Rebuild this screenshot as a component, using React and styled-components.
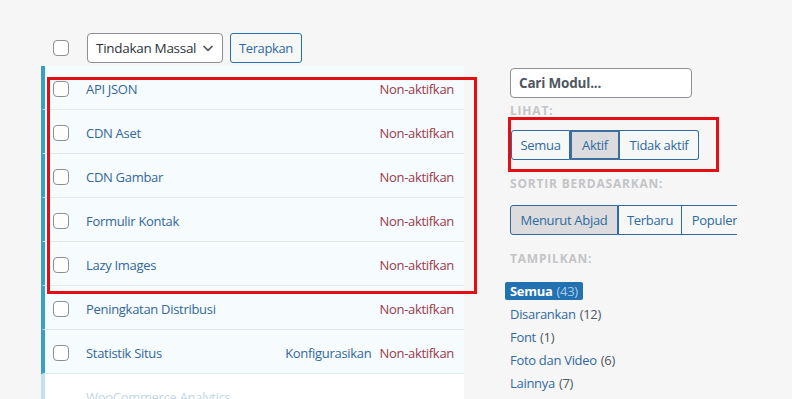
import React from "react";
import styled, { createGlobalStyle } from "styled-components";

const Global = createGlobalStyle`
  html, body { margin: 0; padding: 0; background: #f6f6f6; }
  body { font-family: "Open Sans", "Noto Sans", sans-serif; font-size: 13px; color: #2c3338; }
  * { box-sizing: border-box; }
`;

const Page = styled.div`
  display: flex;
  align-items: flex-start;
  gap: 46px;
  padding: 33px 0 0 41px;
  height: 399px;
  overflow: hidden;
`;

const Main = styled.div`
  width: 423px;
  display: flex;
  flex-direction: column;
`;

const Toolbar = styled.div`
  display: flex;
  align-items: center;
  height: 30px;
  padding-left: 12px;
`;

const Check = styled.span`
  display: inline-block;
  flex: none;
  width: 16px;
  height: 16px;
  border: 1px solid #8c8f94;
  border-radius: 4px;
  background: #fff;
`;

const Select = styled.div`
  margin-left: 18px;
  width: 136px;
  height: 30px;
  border: 1px solid #8c8f94;
  border-radius: 4px;
  background: #fff;
  display: flex;
  align-items: center;
  justify-content: space-between;
  padding: 0 6px 0 8px;
  font-size: 13.5px;
  letter-spacing: -0.3px;
  color: #2c3338;
`;

const Button = styled.div`
  margin-left: 7px;
  height: 30px;
  padding: 0 8px;
  border: 1px solid #2271b1;
  border-radius: 3px;
  background: #f6f7f7;
  color: #2f6aa0;
  display: flex;
  align-items: center;
  letter-spacing: -0.4px;
`;

const Table = styled.div`
  margin-top: 3px;
  display: flex;
  flex-direction: column;
`;

const Row = styled.div`
  height: 44px;
  flex: none;
  display: flex;
  align-items: center;
  padding: 2px 10px 0 8px;
  border-left: 4px solid ${(p) => (p.$inactive ? "#c3e2ef" : "#3a9fc5")};
  border-bottom: 1px solid #e2e8ec;
  background: ${(p) => (p.$inactive ? "#ffffff" : "#f6fbfd")};
`;

const Name = styled.span`
  margin-left: ${(p) => (p.$inactive ? "33px" : "17px")};
  flex: 1;
  color: ${(p) => (p.$inactive ? "#c5d5e2" : "#33679a")};
  letter-spacing: -0.3px;
  white-space: nowrap;
`;

const Action = styled.span`
  color: ${(p) => (p.$danger ? "#9c3a4c" : "#33679a")};
  margin-left: 8px;
  letter-spacing: -0.3px;
`;

const Side = styled.div`
  margin-top: 35px;
  width: 240px;
  display: flex;
  flex-direction: column;
  align-items: flex-start;
`;

const Search = styled.div`
  width: 182px;
  height: 30px;
  border: 1px solid #8c8f94;
  border-radius: 4px;
  background: #fff;
  display: flex;
  align-items: center;
  padding-left: 8px;
  font-weight: 700;
  color: #50575e;
  font-size: 13.5px;
  letter-spacing: -0.2px;
`;

const Label = styled.div`
  font-size: 12px;
  font-weight: 700;
  text-transform: uppercase;
  color: #c3c4c7;
  letter-spacing: 0.8px;
  margin-top: ${(p) => p.$top}px;
  line-height: 16px;
`;

const Group = styled.div`
  display: flex;
  margin-top: ${(p) => p.$top}px;
  margin-left: ${(p) => p.$left || 0}px;
  width: ${(p) => (p.$clip ? `${p.$clip}px` : "auto")};
  overflow: hidden;
`;

const Seg = styled.div`
  flex: none;
  height: 30px;
  display: flex;
  align-items: center;
  justify-content: center;
  width: ${(p) => p.$w}px;
  color: #2f6aa0;
  letter-spacing: -0.3px;
  background: ${(p) => (p.$active ? "#dcdcde" : "#f6f7f7")};
  border: ${(p) => (p.$strong ? "2px solid #3c6fa0" : "1px solid #2f6aa0")};
  border-left-width: ${(p) => (p.$first || p.$sep ? 1 : p.$strong ? 2 : 0)}px;
  border-radius: ${(p) => (p.$first ? "3px 0 0 3px" : p.$last ? "0 3px 3px 0" : "0")};
`;

const List = styled.ul`
  list-style: none;
  margin: 15px 0 0 -5px;
  padding: 0;
  display: flex;
  flex-direction: column;
  align-items: flex-start;
  gap: 5px;
`;

const Item = styled.li`
  height: 18px;
  display: flex;
  align-items: center;
  padding: 0 5px 1px;
  border-radius: 2px;
  background: ${(p) => (p.$current ? "#2271b1" : "transparent")};
  color: ${(p) => (p.$current ? "#fff" : "#2f6aa0")};
  font-weight: ${(p) => (p.$current ? 700 : 400)};
  letter-spacing: -0.3px;
`;

const Count = styled.span`
  margin-left: 4px;
  font-weight: 400;
  color: ${(p) => (p.$current ? "#a9cbe8" : "#50575e")};
`;

const Highlight = styled.div`
  position: absolute;
  border: 3px solid #e30f13;
  pointer-events: none;
  left: ${(p) => p.$x}px;
  top: ${(p) => p.$y}px;
  width: ${(p) => p.$w}px;
  height: ${(p) => p.$h}px;
`;

const Chevron = () => (
  <svg width="16" height="16" viewBox="0 0 16 16">
    <path d="M3.5 6 L8 10.3 L12.5 6" fill="none" stroke="#50575e" strokeWidth="1.7" />
  </svg>
);

const rows = [
  { name: "API JSON" },
  { name: "CDN Aset" },
  { name: "CDN Gambar" },
  { name: "Formulir Kontak" },
  { name: "Lazy Images" },
  { name: "Peningkatan Distribusi" },
  { name: "Statistik Situs", config: true },
];

const cats = [
  { label: "Semua", count: 43, current: true },
  { label: "Disarankan", count: 12 },
  { label: "Font", count: 1 },
  { label: "Foto dan Video", count: 6 },
  { label: "Lainnya", count: 7 },
];

export default function App() {
  return (
    <>
      <Global />
      <Page>
        <Main>
          <Toolbar>
            <Check />
            <Select>
              Tindakan Massal
              <Chevron />
            </Select>
            <Button>Terapkan</Button>
          </Toolbar>
          <Table>
            {rows.map((r) => (
              <Row key={r.name}>
                <Check />
                <Name>{r.name}</Name>
                {r.config && <Action>Konfigurasikan</Action>}
                <Action $danger>Non-aktifkan</Action>
              </Row>
            ))}
            <Row $inactive>
              <Name $inactive>WooCommerce Analytics</Name>
            </Row>
          </Table>
        </Main>
        <Side>
          <Search>Cari Modul...</Search>
          <Label $top={5}>Lihat:</Label>
          <Group $top={11} $left={1}>
            <Seg $w={59} $first>Semua</Seg>
            <Seg $w={50} $active $strong>Aktif</Seg>
            <Seg $w={79} $last>Tidak aktif</Seg>
          </Group>
          <Label $top={16}>Sortir berdasarkan:</Label>
          <Group $top={13} $clip={227}>
            <Seg $w={108} $first $active>Menurut Abjad</Seg>
            <Seg $w={64} $sep>Terbaru</Seg>
            <Seg $w={66} $last>Populer</Seg>
          </Group>
          <Label $top={16}>Tampilkan:</Label>
          <List>
            {cats.map((c) => (
              <Item key={c.label} $current={c.current}>
                {c.label}
                <Count $current={c.current}>({c.count})</Count>
              </Item>
            ))}
          </List>
        </Side>
      </Page>
      <Highlight $x={47} $y={77} $w={430} $h={217} />
      <Highlight $x={508} $y={117} $w={211} $h={55} />
    </>
  );
}
